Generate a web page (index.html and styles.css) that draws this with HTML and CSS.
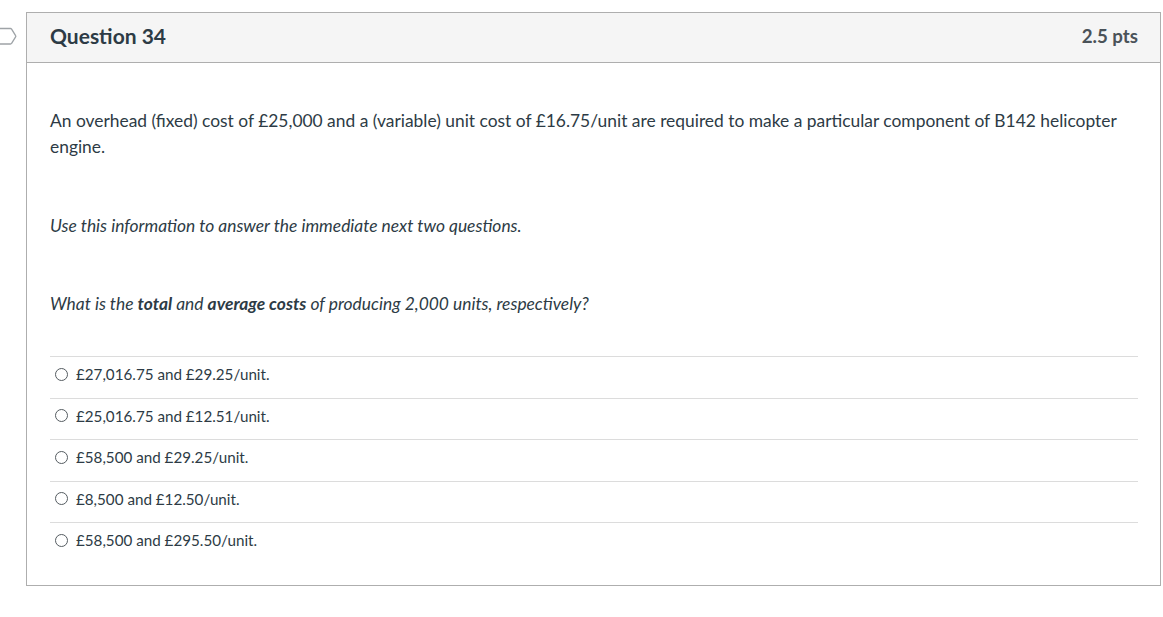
FILE: index.html
```html
<!DOCTYPE html>
<html>
<head>
<meta charset="utf-8">
<link rel="stylesheet" href="styles.css">
</head>
<body>
<svg class="flag" width="18" height="20" viewBox="0 0 18 20">
  <path d="M-3 1.5 H10.5 Q11.2 1.5 11.6 2.2 L15.6 8.6 Q16 9.2 15.6 9.8 L11.6 16.3 Q11.2 17 10.5 17 H-3" fill="none" stroke="#9ea3a7" stroke-width="1.3"/>
</svg>
<div class="card">
  <div class="card-header">
    <span class="title">Question 34</span>
    <span class="pts">2.5 pts</span>
  </div>
  <div class="card-body">
    <p class="para intro">An overhead (fixed) cost of £25,000 and a (variable) unit cost of £16.75/unit are required to make a particular component of B142 helicopter engine.</p>
    <p class="para italic note">Use this information to answer the immediate next two questions.</p>
    <p class="para italic question">What is the <b>total</b> and <b>average costs</b> of producing 2,000 units, respectively?</p>
    <div class="answers">
      <div class="answer"><span class="radio"></span><span>£27,016.75 and £29.25/unit.</span></div>
      <div class="answer"><span class="radio"></span><span>£25,016.75 and £12.51/unit.</span></div>
      <div class="answer"><span class="radio"></span><span>£58,500 and £29.25/unit.</span></div>
      <div class="answer"><span class="radio"></span><span>£8,500 and £12.50/unit.</span></div>
      <div class="answer"><span class="radio"></span><span>£58,500 and £295.50/unit.</span></div>
    </div>
  </div>
</div>
</body>
</html>
```
FILE: styles.css
```css
html, body {
  margin: 0;
  padding: 0;
  background: #ffffff;
}
body {
  font-family: Lato, "Open Sans", sans-serif;
  color: #2d3b45;
  position: relative;
  padding-top: 12px;
  padding-left: 26px;
}
.flag {
  position: absolute;
  left: 0;
  top: 27px;
}
.card {
  width: 1133px;
  border: 1px solid #aeaeae;
  background: #fff;
}
.card-header {
  height: 50px;
  box-sizing: border-box;
  background: #f5f5f5;
  border-bottom: 1px solid #aeaeae;
  display: flex;
  align-items: center;
  justify-content: space-between;
  padding: 0 22px 4px 23px;
}
.title {
  font-weight: 700;
  font-size: 21px;
  color: #2d3b45;
}
.pts {
  font-weight: 700;
  font-size: 18.7px;
  color: #4a5258;
}
.card-body {
  padding: 45px 22px 21px 23px;
}
.para {
  margin: 0;
  font-size: 17.4px;
  line-height: 26px;
}
.intro {
  margin-bottom: 53px;
}
.note {
  margin-bottom: 52px;
}
.question {
  margin-bottom: 39px;
}
.italic {
  font-style: italic;
}
.italic b {
  font-weight: 700;
}
.answer {
  border-top: 1px solid #dcdcdc;
  height: 34.5px;
  padding-bottom: 6px;
  display: flex;
  align-items: center;
  font-size: 15.2px;
  color: #2d3b45;
  padding-left: 5px;
}
.radio {
  width: 11px;
  height: 11px;
  border: 1px solid #555c61;
  border-radius: 50%;
  margin-right: 8px;
  flex: none;
}
```
